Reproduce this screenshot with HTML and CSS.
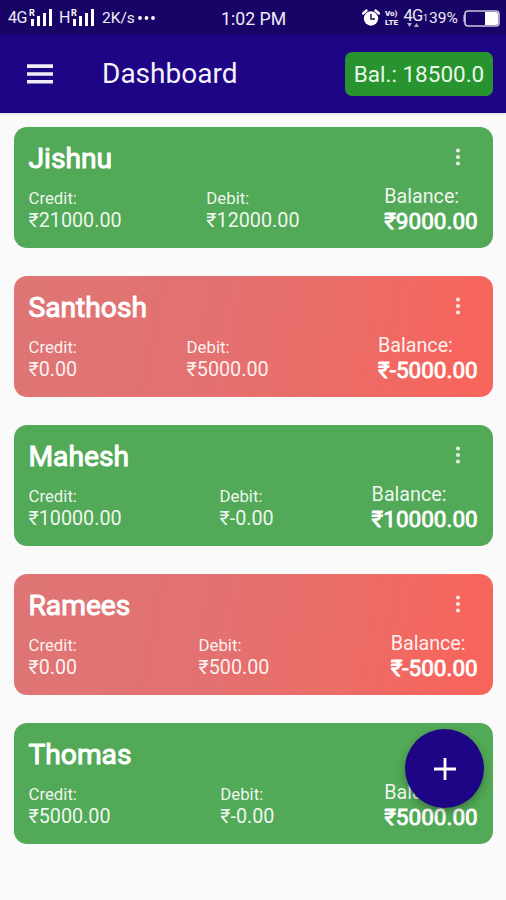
FILE: index.html
```html
<!DOCTYPE html>
<html lang="en">
<head>
<meta charset="utf-8">
<title>Dashboard</title>
<link rel="stylesheet" href="styles.css">
</head>
<body>
<div class="app">
  <header class="top">
    <div class="status">
      <span class="net">4G</span>
      <svg class="signal" width="24" height="20" viewBox="0 0 24 20"><text x="0" y="8" class="roam">R</text><path d="M2 11h3v7H2zM8 8h3v10H8zM14 5h3v13h-3zM20 1h3v17h-3z"/></svg>
      <span class="net second">H</span>
      <svg class="signal" width="24" height="20" viewBox="0 0 24 20"><text x="0" y="8" class="roam">R</text><path d="M2 11h3v7H2zM8 8h3v10H8zM14 5h3v13h-3zM20 1h3v17h-3z"/></svg>
      <span class="rate">2K/s</span>
      <svg class="more" width="18" height="4" viewBox="0 0 18 4"><circle cx="2" cy="2" r="1.9"/><circle cx="8.5" cy="2" r="1.9"/><circle cx="15" cy="2" r="1.9"/></svg>
      <span class="clock">1:02 PM</span>
      <div class="right">
        <svg class="alarm" width="18" height="18" viewBox="0 0 18 18"><circle cx="9" cy="9.5" r="7.2" fill="#fff"/><path d="M1 4.5 4.5 1.5M17 4.5 13.500 1.500" stroke="#fff" stroke-width="2.400" stroke-linecap="round"/><path d="M9 5v5h4" fill="none" stroke="#190a63" stroke-width="1.500"/></svg>
        <span class="volte"><span>Vo)</span><span>LTE</span></span>
        <span class="data">4G<svg width="12" height="5" viewBox="0 0 12 5"><path d="M0 0h5L2.500 4zM7 4h5L9.500 0z"/></svg></span>
        <span class="sim">1</span>
        <span class="pct">39%</span>
        <svg class="battery" width="38" height="17" viewBox="0 0 38 17"><path d="M3 5H1.500v7H3" fill="#d8d4e6"/><rect x="3" y="1" width="34" height="15" rx="3" fill="none" stroke="#c9c5df" stroke-width="1.600"/><path d="M23 2h11q2 0 2 2v9q0 2-2 2H23z" fill="#fff"/></svg>
      </div>
    </div>
    <div class="bar">
      <svg class="menu" width="26" height="20" viewBox="0 0 26 20"><path d="M0 .3h26v3.600H0zM0 8.200h26v3.600H0zM0 16h26v3.600H0z"/></svg>
      <h1>Dashboard</h1>
      <div class="total">Bal.: 18500.0</div>
    </div>
  </header>
  <main class="list">
    <article class="card gain">
      <div class="head"><h2>Jishnu</h2><svg class="dots" width="6" height="18" viewBox="0 0 6 18"><circle cx="3" cy="2.500" r="2.100"/><circle cx="3" cy="9" r="2.100"/><circle cx="3" cy="15.500" r="2.100"/></svg></div>
      <dl><div><dt>Credit:</dt><dd>₹21000.00</dd></div><div><dt>Debit:</dt><dd>₹12000.00</dd></div><div class="balance"><dt>Balance:</dt><dd>₹9000.00</dd></div></dl>
    </article>
    <article class="card loss">
      <div class="head"><h2>Santhosh</h2><svg class="dots" width="6" height="18" viewBox="0 0 6 18"><circle cx="3" cy="2.500" r="2.100"/><circle cx="3" cy="9" r="2.100"/><circle cx="3" cy="15.500" r="2.100"/></svg></div>
      <dl><div><dt>Credit:</dt><dd>₹0.00</dd></div><div><dt>Debit:</dt><dd>₹5000.00</dd></div><div class="balance"><dt>Balance:</dt><dd>₹-5000.00</dd></div></dl>
    </article>
    <article class="card gain">
      <div class="head"><h2>Mahesh</h2><svg class="dots" width="6" height="18" viewBox="0 0 6 18"><circle cx="3" cy="2.500" r="2.100"/><circle cx="3" cy="9" r="2.100"/><circle cx="3" cy="15.500" r="2.100"/></svg></div>
      <dl><div><dt>Credit:</dt><dd>₹10000.00</dd></div><div><dt>Debit:</dt><dd>₹-0.00</dd></div><div class="balance"><dt>Balance:</dt><dd>₹10000.00</dd></div></dl>
    </article>
    <article class="card loss">
      <div class="head"><h2>Ramees</h2><svg class="dots" width="6" height="18" viewBox="0 0 6 18"><circle cx="3" cy="2.500" r="2.100"/><circle cx="3" cy="9" r="2.100"/><circle cx="3" cy="15.500" r="2.100"/></svg></div>
      <dl><div><dt>Credit:</dt><dd>₹0.00</dd></div><div><dt>Debit:</dt><dd>₹500.00</dd></div><div class="balance"><dt>Balance:</dt><dd>₹-500.00</dd></div></dl>
    </article>
    <article class="card gain">
      <div class="head"><h2>Thomas</h2></div>
      <dl><div><dt>Credit:</dt><dd>₹5000.00</dd></div><div><dt>Debit:</dt><dd>₹-0.00</dd></div><div class="balance"><dt>Balance:</dt><dd>₹5000.00</dd></div></dl>
    </article>
  </main>
  <button class="fab" aria-label="Add"><svg width="22" height="22" viewBox="0 0 22 22"><path d="M9.600 0h2.800v9.600H22v2.800h-9.600V22H9.600v-9.600H0V9.600h9.600z"/></svg></button>
</div>
</body>
</html>
```
FILE: styles.css
```css
* { box-sizing: border-box; margin: 0; padding: 0; }
body { background: #fafafa; font-family: Roboto, "Liberation Sans", sans-serif; color: #fff; }
svg { display: block; flex: none; fill: #fff; }
.app { position: relative; height: 900px; overflow: hidden; }
.top { height: 112.500px; background: #1e0585; box-shadow: 0 1px 2px #0002; }
.status { position: relative; display: flex; align-items: center; height: 35px; padding: 1px 6px 0 8px; background: #180466; font-size: 16px; line-height: 20px; color: #eeecf5; }
.net { width: 21px; letter-spacing: -.5px; }
.net.second { width: 12px; margin-left: 6px; }
.signal { margin-top: -1px; }
.roam { font-size: 9px; font-weight: 700; }
.rate { margin-left: 7px; width: 33px; font-size: 15.500px; }
.more { margin-left: 3px; }
.clock { position: absolute; left: 221px; top: 9px; font-size: 17.700px; }
.right { display: flex; align-items: center; margin-left: auto; }
.volte { display: flex; flex-direction: column; width: 17px; margin-left: 5px; font-size: 8px; line-height: 9px; font-weight: 900; }
.data { display: flex; flex-direction: column; align-items: center; width: 20px; margin-left: 1px; font-size: 16.500px; line-height: 14px; letter-spacing: -.8px; }
.data svg { opacity: .65; }
.sim { width: 5px; font-size: 9px; }
.pct { width: 30px; margin-left: 1px; font-size: 15.500px; }
.battery { margin-left: 3px; }
.bar { display: flex; align-items: center; height: 77.500px; padding: 0 13px 0 27px; }
.menu { opacity: .93; }
h1 { margin-left: 49px; padding-top: 1px; font-size: 28px; font-weight: 400; line-height: 36px; color: #f4f2fa; }
.total { width: 148px; height: 44px; margin-left: auto; border-radius: 7px; background: #28942f; font-size: 22.500px; line-height: 45px; text-align: center; color: #e9f8e9; }
.list { display: flex; flex-direction: column; gap: 28.600px; padding: 14.500px 13.500px 0 14.300px; }
.card { height: 120.500px; border-radius: 13px; padding: 14px 14.800px 0 14.200px; }
.gain { background: #52a957; }
.loss { background: linear-gradient(100deg, #df7575 0%, #e37171 40%, #ea6d68 65%, #f5665e 90%, #f8645b 100%); }
.head { display: flex; justify-content: space-between; height: 36px; padding-right: 16.500px; }
h2 { font-size: 28.200px; line-height: 36px; font-weight: 400; -webkit-text-stroke: 1px #fff; }
.dots { margin-top: 7px; opacity: .82; }
dl { display: flex; justify-content: space-between; height: 56px; color: #ffffffe8; }
dl > div { padding-top: 11px; }
dt { font-size: 16.800px; line-height: 20px; }
dd { font-size: 19.750px; line-height: 25px; }
dl > .balance { padding-top: 8px; }
.balance dt { font-size: 19.700px; line-height: 24px; }
.balance dd { font-size: 22.500px; line-height: 25px; color: #fff; -webkit-text-stroke: .8px #fff; }
.fab { position: absolute; left: 405px; top: 729px; width: 79px; height: 79px; display: grid; place-items: center; border: 0; border-radius: 50%; background: #1e0585; box-shadow: 0 4px 8px #0004; }
```
